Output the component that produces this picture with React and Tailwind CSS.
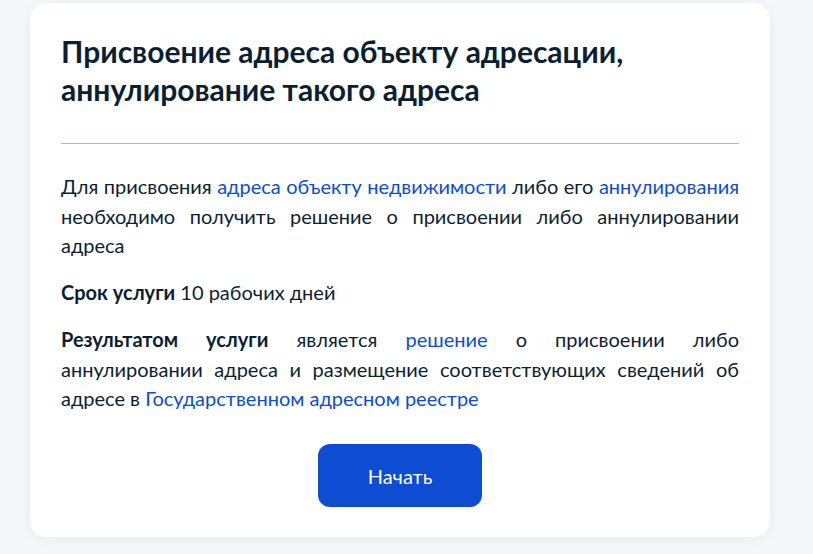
import React from 'react';

const Link = ({ children }) => (
  <a href="#" className="text-[#0d4cd3]">{children}</a>
);

function App() {
  return (
    <div className="min-h-screen w-full bg-[#f5f7fb] font-['Lato',sans-serif] text-[#0b1f33] pt-[3px] pl-[30px]">
      <div className="w-[740px] rounded-2xl bg-white shadow-[0_2px_12px_rgba(11,31,51,0.06)] px-[31px] pt-[29px] pb-[30px]">
        {/* Title */}
        <h1 className="text-[30px] font-bold leading-[38px]">
          Присвоение адреса объекту адресации,
          <br />
          аннулирование такого адреса
        </h1>

        <div className="mt-[35px] h-px bg-[#a6b8e0]" />

        {/* Body */}
        <div className="mt-[28px] text-[20px] leading-[29.5px] text-justify">
          <p>
            Для присвоения <Link>адреса объекту недвижимости</Link> либо его{' '}
            <Link>аннулирования</Link> необходимо получить решение о присвоении
            либо аннулировании адреса
          </p>
          <p className="mt-[17.5px]">
            <b className="font-bold">Срок услуги</b> 10 рабочих дней
          </p>
          <p className="mt-[17.5px]">
            <b className="font-bold">Результатом услуги</b> является{' '}
            <Link>решение</Link> о присвоении либо аннулировании адреса и
            размещение соответствующих сведений об адресе в{' '}
            <Link>Государственном адресном реестре</Link>
          </p>
        </div>

        <div className="mt-[30.5px] flex justify-center">
          <button className="h-[63px] w-[164px] rounded-xl bg-[#0d4cd3] text-[20px] text-white">
            Начать
          </button>
        </div>
      </div>
    </div>
  );
}

export default App;
